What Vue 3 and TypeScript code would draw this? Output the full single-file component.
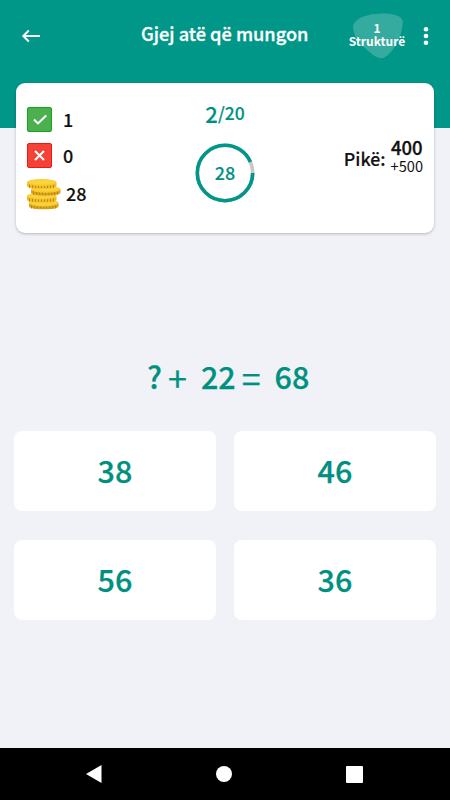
<script setup lang="ts">
interface Coin {
  x: number
  y: number
  edge: string
}

const coins: Coin[] = [
  { x: 2, y: 20.5, edge: '#d9a41c' },
  { x: 0, y: 13.7, edge: '#efbb27' },
  { x: 4, y: 6.8, edge: '#d9a41c' },
  { x: 0, y: 0, edge: '#efbb27' },
]
const ridges: number[] = [2, 5, 8, 11, 14, 17, 20, 23, 26]
const answers: number[] = [38, 46, 56, 36]

const score = { correct: 1, wrong: 0, coins: 28 }
const question = { current: 2, total: 20 }
const timer = { left: 28, total: 30 }
const radius = 27.7
const circumference = 2 * Math.PI * radius
const dash = `${(circumference * timer.left) / timer.total} ${circumference}`
</script>

<template>
  <div class="screen">
    <header class="bar">
      <svg class="back" viewBox="0 0 20 14" width="20" height="14">
        <path d="M19 7H2.500M7.800 1.500L2.300 7l5.500 5.500" fill="none" stroke="#fff" stroke-width="2" />
      </svg>
      <h1 class="title">Gjej atë që mungon</h1>
      <div class="level">
        <svg class="blob" viewBox="0 0 50 46" width="50" height="46">
          <path d="M0 14C1 4 18 0.500 30 0.500C40 0.500 50 3 49.700 9C49.400 22 43 34 36 41C30 47 25 46 19 41C11 34 1 28 0 14Z" />
        </svg>
        <span class="level-number">1</span>
        <span class="level-name">Strukturë</span>
      </div>
      <svg class="dots" viewBox="0 0 6 18" width="6" height="18">
        <circle cx="3" cy="2.300" r="2.300" /><circle cx="3" cy="9" r="2.300" /><circle cx="3" cy="15.700" r="2.300" />
      </svg>
    </header>

    <section class="card">
      <div class="tally">
        <div class="tally-row">
          <svg class="box" viewBox="0 0 25 25" width="25" height="25">
            <rect x="0.500" y="0.500" width="24" height="24" rx="1.500" fill="#4caf50" stroke="#16a51a" />
            <path d="M7 12.500l4 3.900 8.200-8" fill="none" stroke="#fff" stroke-width="2.100" />
          </svg>
          <span class="count">{{ score.correct }}</span>
        </div>
        <div class="tally-row">
          <svg class="box" viewBox="0 0 25 25" width="25" height="25">
            <rect x="0.500" y="0.500" width="24" height="24" rx="1.500" fill="#f44336" stroke="#ed1717" />
            <path d="M8 8l9 9M17 8l-9 9" fill="none" stroke="#fff" stroke-width="2.100" />
          </svg>
          <span class="count">{{ score.wrong }}</span>
        </div>
        <div class="tally-row coins-row">
          <svg viewBox="0 0 34 31" width="34" height="31">
            <g v-for="coin in coins" :key="coin.y" :transform="`translate(${coin.x} ${coin.y})`">
              <path d="M0 3.500V7C1 10.800 28.500 10.800 29.500 7V3.500Z" :fill="coin.edge" />
              <path v-for="r in ridges" :key="r" :d="`M${r + 0.500} 5V9`" stroke="#b98a18" stroke-width="1" />
              <ellipse cx="14.750" cy="3.500" rx="14.750" ry="3.400" fill="#fcc82c" />
              <ellipse cx="14.750" cy="3" rx="13" ry="2.500" fill="#fad43c" />
            </g>
          </svg>
          <span class="count">{{ score.coins }}</span>
        </div>
      </div>

      <div class="progress">
        <div class="step"><span class="current">{{ question.current }}</span><span class="total">/{{ question.total }}</span></div>
        <div class="timer">
          <svg class="ring" viewBox="0 0 60 60" width="60" height="60">
            <circle cx="30" cy="30" :r="radius" stroke="#c8c8c8" />
            <circle cx="30" cy="30" :r="radius" stroke="#009788" :stroke-dasharray="dash" />
          </svg>
          <span class="seconds">{{ timer.left }}</span>
        </div>
      </div>

      <div class="points">
        <span class="points-label">Pikë:</span>
        <div class="points-values">
          <span class="points-total">400</span>
          <span class="points-gain">+500</span>
        </div>
      </div>
    </section>

    <main class="game">
      <div class="equation">
        <span class="missing">?</span><span class="op plus">+</span><span class="operand">22</span><span class="op equals">=</span><span>68</span>
      </div>
      <div class="answers">
        <button v-for="answer in answers" :key="answer" type="button" class="answer">{{ answer }}</button>
      </div>
    </main>

    <nav class="system">
      <svg viewBox="0 0 16 18" width="16" height="18"><path d="M0 9L15.500 0V18Z" /></svg>
      <svg viewBox="0 0 16 16" width="16" height="16"><circle cx="8" cy="8" r="8" /></svg>
      <svg viewBox="0 0 17 17" width="17" height="17"><rect width="17" height="17" rx="1" /></svg>
    </nav>
  </div>
</template>

<style>
body {
  margin: 0;
}
</style>

<style scoped>
.screen {
  display: flex;
  flex-direction: column;
  width: 450px;
  height: 800px;
  overflow: hidden;
  background: #f0f2f8;
  color: #111;
  font-family: "Noto Sans CJK SC", "Open Sans", sans-serif;
  font-weight: 500;
}
svg {
  display: block;
  flex: none;
}
.bar {
  display: flex;
  flex: none;
  align-items: flex-start;
  box-sizing: border-box;
  height: 128px;
  padding-left: 21px;
  background: #009788;
  color: #fff;
}
.back {
  margin-top: 29px;
}
.title {
  width: 168px;
  margin: 19px 0 0 100px;
  font-size: 18.200px;
  line-height: 28px;
  font-weight: 500;
  white-space: nowrap;
  -webkit-text-stroke: 0.300px currentColor;
}
.level {
  position: relative;
  display: flex;
  flex-direction: column;
  align-items: center;
  width: 60px;
  margin: 21px 0 0 38px;
  font-size: 12px;
  line-height: 13px;
  font-weight: 700;
}
.blob {
  position: absolute;
  left: 6px;
  top: -8px;
  fill: #35aba0;
}
.level-number,
.level-name {
  position: relative;
}
.dots {
  margin: 27px 0 0 16px;
  fill: #fff;
}
.card {
  display: grid;
  flex: none;
  grid-template-columns: 1fr 60px 1fr;
  box-sizing: border-box;
  height: 150px;
  margin: -45px 16px 0;
  padding: 0 11px;
  border-radius: 9px;
  background: #fff;
  box-shadow: 0 1px 3px rgba(0, 0, 0, 0.25);
}
.tally {
  display: flex;
  flex-direction: column;
  gap: 11px;
  padding-top: 24px;
}
.tally-row {
  display: flex;
  align-items: center;
  gap: 11px;
  height: 25px;
}
.coins-row {
  gap: 5px;
  height: 31px;
}
.count {
  padding-bottom: 2px;
  font-size: 18px;
  line-height: 22px;
  -webkit-text-stroke: 0.150px currentColor;
}
.coins-row .count {
  padding-bottom: 4px;
}
.progress {
  display: flex;
  flex-direction: column;
  align-items: center;
  color: #009080;
  -webkit-text-stroke: 0.150px currentColor;
}
.step {
  display: flex;
  margin-top: 17px;
  font-size: 17.500px;
  line-height: 26px;
  white-space: nowrap;
}
.current {
  font-size: 22px;
}
.timer {
  display: grid;
  place-items: center;
  margin-top: 17px;
}
.ring,
.seconds {
  grid-area: 1 / 1;
}
.ring {
  fill: none;
  stroke-width: 3.600;
}
.seconds {
  padding-bottom: 2px;
  font-size: 18px;
  line-height: 20px;
}
.points {
  display: flex;
  justify-content: flex-end;
  gap: 5px;
  padding-top: 54px;
}
.points-label {
  margin-top: 10px;
  font-size: 17.800px;
  line-height: 22px;
  -webkit-text-stroke: 0.150px currentColor;
}
.points-values {
  display: flex;
  flex-direction: column;
  align-items: center;
}
.points-total {
  font-size: 18.500px;
  line-height: 20px;
  -webkit-text-stroke: 0.300px currentColor;
}
.points-gain {
  font-size: 14.600px;
  line-height: 17px;
  font-weight: 400;
}
.game {
  flex: 1;
  color: #009080;
  -webkit-text-stroke: 0.250px currentColor;
}
.equation {
  display: flex;
  padding-left: 147px;
  margin-top: 123px;
  font-size: 30.500px;
  line-height: 40px;
}
.op {
  height: 38px;
  padding-top: 2px;
  font-size: 34px;
  font-weight: 400;
}
.plus {
  margin: 0 14px 0 6px;
}
.equals {
  margin: 0 14px 0 6px;
}
.answers {
  display: grid;
  grid-template-columns: 1fr 1fr;
  gap: 29px 18px;
  margin-top: 35px;
  padding: 0 14px;
}
.answer {
  height: 80px;
  padding: 0 0 2px;
  border: 0;
  border-radius: 8px;
  background: #fff;
  color: inherit;
  font: inherit;
  font-size: 30.500px;
  line-height: 78px;
}
.system {
  display: flex;
  flex: none;
  align-items: center;
  justify-content: space-between;
  box-sizing: border-box;
  height: 52px;
  padding: 0 87px 0 86px;
  background: #000;
  fill: #fff;
}
</style>
